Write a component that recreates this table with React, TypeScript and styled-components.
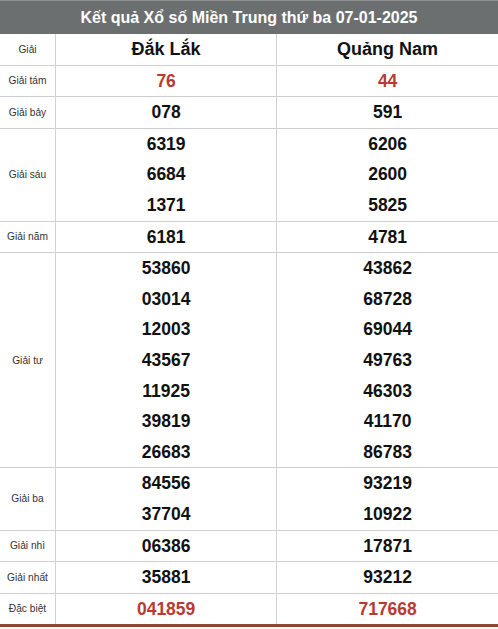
import styled, { createGlobalStyle } from "styled-components";

const GlobalStyle = createGlobalStyle`
  html, body {
    margin: 0;
    padding: 0;
    background: #ffffff;
    font-family: "Liberation Sans", Arial, sans-serif;
  }
`;

const Wrapper = styled.div`
  width: 498px;
  border-bottom: 3px solid #8a4a30;
`;

const Title = styled.div`
  height: 34px;
  line-height: 34px;
  background: #6c6f6f;
  border-top: 1px solid #8d9090;
  box-sizing: border-box;
  color: #ffffff;
  font-size: 16px;
  font-weight: bold;
  text-align: center;
`;

const Table = styled.table`
  width: 100%;
  border-collapse: collapse;
  table-layout: fixed;
`;

const Row = styled.tr`
  border-bottom: 1px solid #cfcfcf;
  &:last-child {
    border-bottom: none;
  }
`;

const LabelCell = styled.td`
  width: 55px;
  padding: 0;
  border-right: 1px solid #d2d2d2;
  text-align: center;
  vertical-align: middle;
  font-size: 10.2px;
  color: #333333;
`;

const ValueCell = styled.td<{ $last?: boolean }>`
  padding: 0;
  text-align: center;
  vertical-align: middle;
  border-right: ${({ $last }) => ($last ? "none" : "1px solid #d2d2d2")};
`;

const Province = styled.div`
  line-height: 30.6px;
  font-size: 18px;
  font-weight: bold;
  color: #111111;
`;

const Num = styled.div<{ $red?: boolean }>`
  line-height: 30.6px;
  font-size: 17.5px;
  font-weight: bold;
  color: ${({ $red }) => ($red ? "#b93a30" : "#111111")};
`;

type Prize = { label: string; a: string[]; b: string[]; red?: boolean };

const prizes: Prize[] = [
  { label: "Giải tám", a: ["76"], b: ["44"], red: true },
  { label: "Giải bảy", a: ["078"], b: ["591"] },
  { label: "Giải sáu", a: ["6319", "6684", "1371"], b: ["6206", "2600", "5825"] },
  { label: "Giải năm", a: ["6181"], b: ["4781"] },
  {
    label: "Giải tư",
    a: ["53860", "03014", "12003", "43567", "11925", "39819", "26683"],
    b: ["43862", "68728", "69044", "49763", "46303", "41170", "86783"],
  },
  { label: "Giải ba", a: ["84556", "37704"], b: ["93219", "10922"] },
  { label: "Giải nhì", a: ["06386"], b: ["17871"] },
  { label: "Giải nhất", a: ["35881"], b: ["93212"] },
  { label: "Đặc biệt", a: ["041859"], b: ["717668"], red: true },
];

export default function App() {
  return (
    <>
      <GlobalStyle />
      <Wrapper>
        <Title>Kết quả Xổ số Miền Trung thứ ba 07-01-2025</Title>
        <Table>
          <tbody>
            <Row>
              <LabelCell>Giải</LabelCell>
              <ValueCell>
                <Province>Đắk Lắk</Province>
              </ValueCell>
              <ValueCell $last>
                <Province>Quảng Nam</Province>
              </ValueCell>
            </Row>
            {prizes.map((p) => (
              <Row key={p.label}>
                <LabelCell>{p.label}</LabelCell>
                <ValueCell>
                  {p.a.map((n, i) => (
                    <Num key={i} $red={p.red}>
                      {n}
                    </Num>
                  ))}
                </ValueCell>
                <ValueCell $last>
                  {p.b.map((n, i) => (
                    <Num key={i} $red={p.red}>
                      {n}
                    </Num>
                  ))}
                </ValueCell>
              </Row>
            ))}
          </tbody>
        </Table>
      </Wrapper>
    </>
  );
}
